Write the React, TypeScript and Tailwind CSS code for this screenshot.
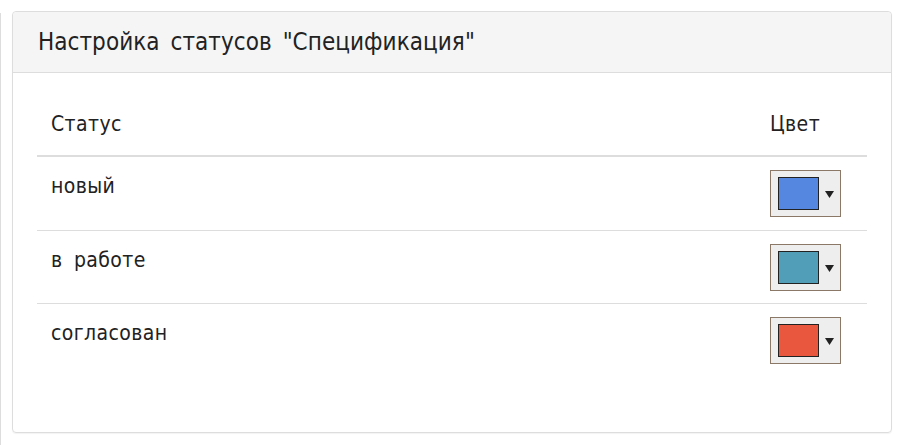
import React from "react";

const rows = [
  { name: "новый", color: "#5586e0", h: "h-[74px]" },
  { name: "в работе", color: "#519eb9", h: "h-[73px]" },
  { name: "согласован", color: "#e9573f", h: "h-[73px]" },
];

function ColorPicker({ color }: { color: string }) {
  return (
    <div className="flex h-[47px] w-[71px] items-center border border-[#8c7866] bg-[#eeeeee] pl-[7px]">
      <div className="h-[33px] w-[41px] border border-[#222222]" style={{ backgroundColor: color }} />
      <svg className="ml-[6px]" width="9" height="8" viewBox="0 0 9 8">
        <polygon points="0,1 9,1 4.5,8" fill="#222222" />
      </svg>
    </div>
  );
}

export default function App() {
  return (
    <div
      className="flex h-[445px] w-[904px] bg-white text-[#222222]"
      style={{ fontFamily: '"DejaVu Sans Condensed", "DejaVu Sans", sans-serif' }}
    >
      <div className="mt-[13px] w-[1px] self-stretch bg-[#dddddd]" />
      <div className="ml-[11px] mt-[11px] flex h-[422px] w-[880px] flex-col rounded-[4px] border border-[#dddddd] shadow-[0_1px_1px_rgba(0,0,0,0.05)]">
        <div className="flex h-[61px] items-center rounded-t-[4px] border-b border-[#dddddd] bg-[#f5f5f5] px-[25px]">
          <h3 className="text-[24px] leading-none tracking-[0.05px] [word-spacing:4px]">
            Настройка статусов "Спецификация"
          </h3>
        </div>
        <div className="px-[24px] pt-[24px]">
          <div className="grid grid-cols-[1fr_111px] text-[21px] leading-[28px] tracking-[0.4px] [word-spacing:5px]">
            <div className="h-[60px] border-b-2 border-[#dddddd] pl-[14px] pt-[13px]">Статус</div>
            <div className="h-[60px] border-b-2 border-[#dddddd] pl-[14px] pt-[13px]">Цвет</div>
            {rows.map((r, i) => (
              <React.Fragment key={r.name}>
                <div
                  className={`${r.h} pl-[14px] pt-[15px] ${
                    i < rows.length - 1 ? "border-b border-[#dddddd]" : ""
                  }`}
                >
                  {r.name}
                </div>
                <div
                  className={`${r.h} pl-[14px] pt-[13px] ${
                    i < rows.length - 1 ? "border-b border-[#dddddd]" : ""
                  }`}
                >
                  <ColorPicker color={r.color} />
                </div>
              </React.Fragment>
            ))}
          </div>
        </div>
      </div>
    </div>
  );
}
